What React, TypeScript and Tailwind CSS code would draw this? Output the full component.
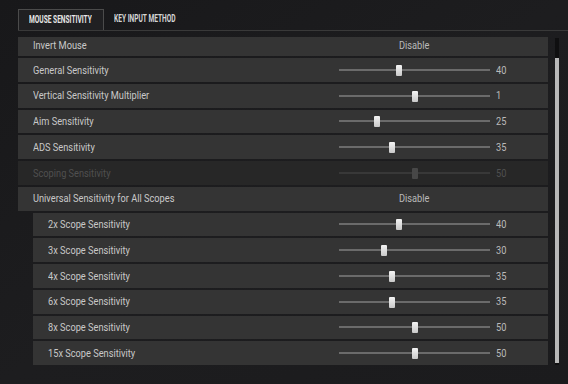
import React from "react";

type Row =
  | { kind: "toggle"; label: string; value: string; sub?: boolean }
  | { kind: "slider"; label: string; value: number; pos: number; sub?: boolean; disabled?: boolean };

const rows: Row[] = [
  { kind: "slider", label: "General Sensitivity", value: 40, pos: 40 },
  { kind: "slider", label: "Vertical Sensitivity Multiplier", value: 1, pos: 50 },
  { kind: "slider", label: "Aim Sensitivity", value: 25, pos: 25 },
  { kind: "slider", label: "ADS Sensitivity", value: 35, pos: 35 },
  { kind: "slider", label: "Scoping Sensitivity", value: 50, pos: 50, disabled: true },
  { kind: "toggle", label: "Universal Sensitivity for All Scopes", value: "Disable" },
  { kind: "slider", label: "2x Scope Sensitivity", value: 40, pos: 40, sub: true },
  { kind: "slider", label: "3x Scope Sensitivity", value: 30, pos: 30, sub: true },
  { kind: "slider", label: "4x Scope Sensitivity", value: 35, pos: 35, sub: true },
  { kind: "slider", label: "6x Scope Sensitivity", value: 35, pos: 35, sub: true },
  { kind: "slider", label: "8x Scope Sensitivity", value: 50, pos: 50, sub: true },
  { kind: "slider", label: "15x Scope Sensitivity", value: 50, pos: 50, sub: true },
];

// narrow game-ui type: Roboto squeezed horizontally
const narrow = "inline-block origin-left scale-x-[0.84] whitespace-nowrap";
const tabText = "inline-block origin-left scale-x-[0.6] whitespace-nowrap";

function Slider({ pos, disabled }: { pos: number; disabled?: boolean }) {
  return (
    <div className="relative w-[151px] h-[12px] flex items-center shrink-0">
      <div className={`w-full h-[2px] ${disabled ? "bg-[#383838]" : "bg-[#6b6b6b]"}`} />
      <div
        className={`absolute top-[1px] w-[6px] h-[11px] rounded-[1px] -ml-[3px] ${
          disabled ? "bg-[#474747]" : "bg-gradient-to-b from-[#f4f4f4] to-[#c9c9c9]"
        }`}
        style={{ left: `${pos}%` }}
      />
    </div>
  );
}

function Label({ text, sub, disabled, className = "" }: { text: string; sub?: boolean; disabled?: boolean; className?: string }) {
  return (
    <div
      className={`${sub ? "w-[306px]" : "w-[321px]"} pl-[15px] pt-[2px] text-[11px] shrink-0 ${
        disabled ? "text-[#505050]" : "text-[#c9c9c9]"
      } ${className}`}
    >
      <span className={narrow}>{text}</span>
    </div>
  );
}

function Toggle({ value, className = "" }: { value: string; className?: string }) {
  return (
    <div className={`w-[151px] pt-[2px] text-center text-[11px] text-[#bababa] ${className}`}>
      <span className="inline-block scale-x-[0.84]">{value}</span>
    </div>
  );
}

function SettingRow({ row }: { row: Row }) {
  const disabled = row.kind === "slider" && row.disabled;
  return (
    <div
      className={`flex items-center h-[23.75px] mt-[2px] ${row.sub ? "ml-[15px]" : ""} ${
        disabled ? "bg-[#272727]" : "bg-[#343434]"
      }`}
    >
      <Label text={row.label} sub={row.sub} disabled={disabled} />
      {row.kind === "slider" ? (
        <>
          <Slider pos={row.pos} disabled={row.disabled} />
          <div className={`pl-[6px] pt-[2px] text-[11px] ${disabled ? "text-[#505050]" : "text-[#bababa]"}`}>
            <span className={narrow}>{row.value}</span>
          </div>
        </>
      ) : (
        <Toggle value={row.value} />
      )}
    </div>
  );
}

export default function App() {
  return (
    <div className="w-[568px] h-[384px] overflow-hidden bg-gradient-to-br from-[#18181a] via-[#1d1d1f] to-[#1b1b1d] font-['Roboto',sans-serif]">
      <div className="pt-[10px] pl-[18px]">
        <div className="flex items-end h-[21px] border-b border-[#393939]">
          <div className="w-[86px] h-[21px] pl-[10px] flex items-center border border-b-0 border-[#4b4b4b] bg-[#202022] text-[11px] font-bold text-[#e6e6e6]">
            <span className={tabText}>MOUSE SENSITIVITY</span>
          </div>
          <div className="w-[80px] h-[21px] pl-[10px] flex items-center text-[11px] font-bold text-[#d4d4d4]">
            <span className={tabText}>KEY INPUT METHOD</span>
          </div>
        </div>
      </div>

      <div className="flex mt-[6px]">
        <div className="ml-[18px] w-[530px] h-[328px] overflow-hidden">
          <div className="flex items-center h-[19px] bg-[#343434]">
            <Label text="Invert Mouse" className="-mt-[2px]" />
            <Toggle value="Disable" className="-mt-[2px]" />
          </div>
          {rows.map((row) => (
            <SettingRow key={row.label} row={row} />
          ))}
        </div>
        <div className="ml-[7px] mt-[1px] w-[4px] h-[327px] bg-[#0f0f10] flex flex-col pt-[20px] pb-[2px]">
          <div className="flex-1 bg-[#b8b8b8]" />
        </div>
      </div>
    </div>
  );
}
